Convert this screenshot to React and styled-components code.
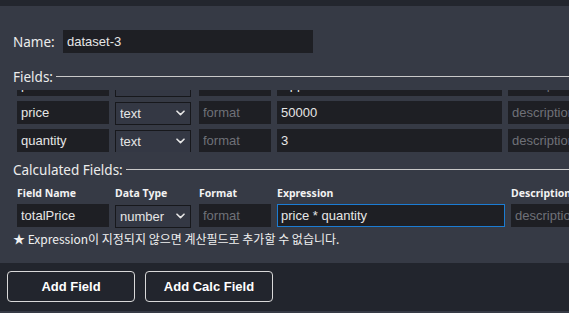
import React, { useEffect, useRef } from "react";
import styled, { createGlobalStyle } from "styled-components";

const GlobalStyle = createGlobalStyle`
  html, body {
    margin: 0;
    padding: 0;
    background: #363a45;
    overflow: hidden;
  }
  * {
    box-sizing: border-box;
  }
`;

const fields = [
  { name: "product", type: "text", value: "Apple" },
  { name: "price", type: "text", value: "50000" },
  { name: "quantity", type: "text", value: "3" },
];

function Chevron() {
  return (
    <svg width="9" height="6" viewBox="0 0 9 6">
      <path
        d="M1 1.2 L4.5 4.6 L8 1.2"
        fill="none"
        stroke="#e6e6e6"
        strokeWidth="1.6"
        strokeLinecap="round"
        strokeLinejoin="round"
      />
    </svg>
  );
}

function TypeSelect({ value }) {
  return (
    <SelectWrap>
      <StyledSelect defaultValue={value}>
        <option value="text">text</option>
        <option value="number">number</option>
        <option value="date">date</option>
      </StyledSelect>
      <ChevronBox>
        <Chevron />
      </ChevronBox>
    </SelectWrap>
  );
}

export default function App() {
  const listRef = useRef(null);

  // the list is scrolled down a little, as in the screenshot
  useEffect(() => {
    if (listRef.current) listRef.current.scrollTop = 17;
  }, []);

  return (
    <>
      <GlobalStyle />
      <Page>
        <TopBar />
        <Panel>
          <NameRow>
            <Label>Name:</Label>
            <NameInput defaultValue="dataset-3" />
          </NameRow>

          <SectionTitle>
            <span>Fields:</span>
            <Rule />
          </SectionTitle>
          <FieldList ref={listRef}>
            {fields.map((f) => (
              <FieldRow key={f.name}>
                <TextInput defaultValue={f.name} />
                <TypeSelect value={f.type} />
                <TextInput placeholder="format" />
                <TextInput defaultValue={f.value} />
                <TextInput placeholder="description" />
              </FieldRow>
            ))}
          </FieldList>

          <SectionTitle $calc>
            <span>Calculated Fields:</span>
            <Rule />
          </SectionTitle>
          <CalcGrid>
            <ColHead>Field Name</ColHead>
            <ColHead>Data Type</ColHead>
            <ColHead>Format</ColHead>
            <ColHead>Expression</ColHead>
            <ColHead>Description</ColHead>
            <TextInput defaultValue="totalPrice" />
            <TypeSelect value="number" />
            <TextInput placeholder="format" />
            <TextInput $focused defaultValue="price * quantity" />
            <TextInput placeholder="description" />
          </CalcGrid>
          <Note>★ Expression이 지정되지 않으면 계산필드로 추가할 수 없습니다.</Note>
        </Panel>
        <Footer>
          <FooterButton>Add Field</FooterButton>
          <FooterButton>Add Calc Field</FooterButton>
        </Footer>
        <BottomStrip />
      </Page>
    </>
  );
}

const Page = styled.div`
  width: 569px;
  height: 313px;
  display: flex;
  flex-direction: column;
  overflow: hidden;
  color: #ececec;
  font-family: "Noto Sans", "Noto Sans CJK KR", sans-serif;
`;

const TopBar = styled.div`
  height: 6px;
  flex: none;
  background: #23262e;
`;

const Panel = styled.div`
  flex: none;
  height: 257px;
  background: #363a45;
  padding: 24px 0 0 13px;
  width: 720px;
`;

const NameRow = styled.div`
  display: flex;
  align-items: center;
  gap: 10px;
  height: 23px;
`;

const Label = styled.span`
  font-size: 13.5px;
  width: 40px;
`;

const NameInput = styled.input`
  width: 250px;
  height: 23px;
  border: none;
  outline: none;
  background: #1e1f24;
  color: #e6e6e6;
  font-family: "Liberation Sans", Arial, sans-serif;
  font-size: 13px;
  padding: 0 4px;
`;

const SectionTitle = styled.div`
  display: flex;
  align-items: center;
  gap: 3px;
  font-size: 13.5px;
  height: 18px;
  margin-top: ${(p) => (p.$calc ? "9px" : "15px")};
  line-height: 18px;
`;

const Rule = styled.div`
  flex: 1;
  height: 1px;
  background: #c9c9c9;
  margin-top: -1px;
`;

const FieldList = styled.div`
  margin-top: 4px;
  height: 62px;
  overflow: hidden;
  padding: 0 0 0 4px;
  display: flex;
  flex-direction: column;
  gap: 5px;
`;

const FieldRow = styled.div`
  flex: none;
  display: grid;
  grid-template-columns: 92px 78px 72px 225px 120px;
  column-gap: 6px;
  height: 23px;
`;

const CalcGrid = styled.div`
  display: grid;
  grid-template-columns: 92px 78px 72px 228px 120px;
  grid-template-rows: 14px 23px;
  column-gap: 6px;
  row-gap: 4px;
  margin-top: 7px;
  padding-left: 4px;
`;

const ColHead = styled.div`
  font-size: 10.5px;
  font-weight: 700;
  line-height: 14px;
  color: #f2f2f2;
  white-space: nowrap;
`;

const TextInput = styled.input`
  width: 100%;
  height: 23px;
  background: #1e1f24;
  color: #e6e6e6;
  border: 1px solid ${(p) => (p.$focused ? "#1b7cd3" : "#1e1f24")};
  outline: none;
  font-family: "Liberation Sans", Arial, sans-serif;
  font-size: 13px;
  padding: 0 3px;

  &::placeholder {
    color: #6f7178;
  }
`;

const SelectWrap = styled.div`
  position: relative;
  width: 76px;
  height: 23px;
`;

const StyledSelect = styled.select`
  appearance: none;
  width: 100%;
  height: 100%;
  background: #343844;
  border: 1px solid #17181c;
  color: #e6e6e6;
  font-family: "Liberation Sans", Arial, sans-serif;
  font-size: 13px;
  padding: 0 0 0 4px;
  outline: none;
`;

const ChevronBox = styled.span`
  position: absolute;
  right: 6px;
  top: 9px;
  display: flex;
  pointer-events: none;
`;

const Note = styled.div`
  margin-top: 5px;
  font-family: "Noto Sans CJK KR", "Noto Sans", sans-serif;
  font-size: 12px;
  line-height: 14px;
  color: #f0f0f0;
  white-space: nowrap;
`;

const Footer = styled.div`
  flex: none;
  height: 48px;
  background: #22252d;
  display: flex;
  align-items: flex-start;
  gap: 10px;
  padding: 8px 0 0 7px;
`;

const FooterButton = styled.button`
  width: 128px;
  height: 31px;
  background: #22252d;
  border: 1px solid #d9d9d9;
  border-radius: 4px;
  color: #ffffff;
  font-family: "Liberation Sans", Arial, sans-serif;
  font-weight: 700;
  font-size: 13px;
  cursor: pointer;
`;

const BottomStrip = styled.div`
  flex: 1;
  background: #363a45;
`;
